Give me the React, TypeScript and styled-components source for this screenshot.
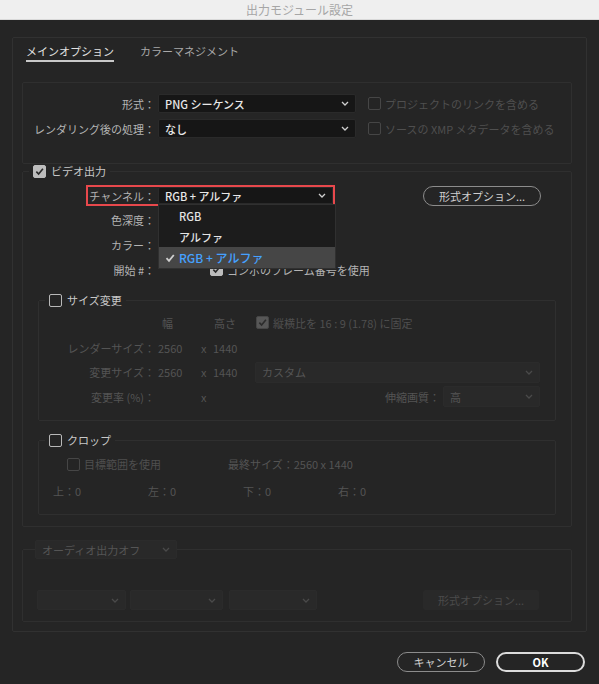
import React from "react";
import styled, { createGlobalStyle } from "styled-components";

const GlobalStyle = createGlobalStyle`
  html, body {
    margin: 0;
    padding: 0;
    background: #252525;
  }
  body {
    font-family: "Noto Sans CJK JP", "Noto Sans", sans-serif;
    font-size: 11px;
    line-height: 14px;
    color: #b4b4b4;
  }
  * {
    box-sizing: border-box;
  }
`;

const Window = styled.div`
  width: 599px;
  height: 684px;
  background: #252525;
  display: flex;
  flex-direction: column;
`;

const TitleBar = styled.div`
  height: 20px;
  background: #efefef;
  border-bottom: 1px solid #d9d9d9;
  display: flex;
  align-items: center;
  justify-content: center;
  color: #a6a6a6;
  font-size: 12px;
`;

const Panel = styled.div`
  margin: 17px 12px 0;
  height: 595px;
  border: 1px solid #313131;
  border-radius: 2px;
  display: flex;
  flex-direction: column;
`;

const TabBar = styled.div`
  display: flex;
  gap: 26px;
  padding-left: 13px;
`;

const Tab = styled.div<{ $active?: boolean }>`
  padding: 6px 0 2px;
  border-bottom: 2px solid ${(p) => (p.$active ? "#c9c9c9" : "transparent")};
  color: ${(p) => (p.$active ? "#e2e2e2" : "#a9a9a9")};
`;

const FormatBox = styled.div`
  margin: 20px 14px 0 9px;
  border: 1px solid #2f2f2f;
  border-radius: 2px;
  padding: 11px 0 25px;
  display: flex;
  flex-direction: column;
  gap: 6px;
`;

const Row = styled.div<{ $h?: number; $mt?: number; $pl?: number }>`
  display: flex;
  align-items: center;
  height: ${(p) => p.$h ?? 19}px;
  margin-top: ${(p) => p.$mt ?? 0}px;
  padding-left: ${(p) => p.$pl ?? 0}px;
  white-space: nowrap;
`;

const Label = styled.div<{ $w: number; $off?: boolean }>`
  width: ${(p) => p.$w}px;
  flex-shrink: 0;
  text-align: right;
  color: ${(p) => (p.$off ? "#545454" : "#b4b4b4")};
`;

const Select = styled.div<{ $w: number; $h?: number; $ml?: number; $off?: boolean }>`
  position: relative;
  width: ${(p) => p.$w}px;
  height: ${(p) => p.$h ?? 19}px;
  margin-left: ${(p) => p.$ml ?? 0}px;
  flex-shrink: 0;
  background: ${(p) => (p.$off ? "#292929" : "#161616")};
  border: 1px solid ${(p) => (p.$off ? "#2b2b2b" : "#2a2a2a")};
  border-radius: 2px;
  padding: 0 6px;
  display: flex;
  align-items: center;
  justify-content: space-between;
  color: ${(p) => (p.$off ? "#555555" : "#e8e8e8")};
  font-weight: ${(p) => (p.$off ? 400 : 500)};
`;

const CheckItem = styled.div<{ $ml?: number; $off?: boolean }>`
  display: flex;
  align-items: center;
  gap: 4px;
  margin-left: ${(p) => p.$ml ?? 0}px;
  color: ${(p) => (p.$off ? "#4f4f4f" : "#b4b4b4")};
`;

const Box = styled.span<{ $checked?: boolean; $off?: boolean }>`
  width: 13px;
  height: 13px;
  flex-shrink: 0;
  border-radius: 2px;
  border: 1.5px solid
    ${(p) => (p.$off ? "#464646" : p.$checked ? "#bdbdbd" : "#b9b9b9")};
  background: ${(p) =>
    p.$checked ? (p.$off ? "#575757" : "#bdbdbd") : "transparent"};
  display: inline-flex;
  align-items: center;
  justify-content: center;
`;

const Group = styled.fieldset<{ $m: string; $p: string }>`
  margin: ${(p) => p.$m};
  padding: ${(p) => p.$p};
  border: 1px solid #2f2f2f;
  border-radius: 2px;
  min-width: 0;
`;

const Legend = styled.legend<{ $ml: number; $px?: number }>`
  display: flex;
  margin-left: ${(p) => p.$ml}px;
  padding: 0 ${(p) => p.$px ?? 4}px;
`;

const LegendInner = styled.div`
  display: flex;
  align-items: center;
  gap: 5px;
  height: 14px;
  color: #c8c8c8;
`;

const Highlight = styled.div`
  display: flex;
  align-items: center;
  height: 17px;
  outline: 2px solid #e8484c;
`;

const Menu = styled.div`
  position: absolute;
  top: calc(100% + 1px);
  left: -1px;
  width: 178px;
  background: #1c1c1c;
  border: 1px solid #303030;
  z-index: 5;
  font-weight: 500;
`;

const MenuItem = styled.div<{ $selected?: boolean }>`
  position: relative;
  height: 21px;
  display: flex;
  align-items: center;
  padding-left: 20px;
  font-size: ${(p) => (p.$selected ? 12 : 11)}px;
  background: ${(p) => (p.$selected ? "#464646" : "transparent")};
  color: ${(p) => (p.$selected ? "#45a1ff" : "#e4e4e4")};
  svg {
    position: absolute;
    left: 6px;
  }
`;

const PillButton = styled.div<{ $w: number; $ml?: number; $primary?: boolean }>`
  width: ${(p) => p.$w}px;
  height: 20px;
  margin-left: ${(p) => p.$ml ?? 0}px;
  flex-shrink: 0;
  border-radius: 10px;
  border: ${(p) => (p.$primary ? "2px solid #dcdcdc" : "1.5px solid #8c8c8c")};
  color: ${(p) => (p.$primary ? "#ffffff" : "#cfcfcf")};
  font-weight: ${(p) => (p.$primary ? 700 : 400)};
  display: flex;
  align-items: center;
  justify-content: center;
`;

const FlatButton = styled.div`
  width: 116px;
  height: 20px;
  margin-left: auto;
  background: #292929;
  border-radius: 2px;
  color: #4b4b4b;
  display: flex;
  align-items: center;
  justify-content: center;
`;

const VideoRows = styled.div`
  padding-left: 50px;
`;

const Cell = styled.div<{ $w: number; $pl?: number; $off?: boolean }>`
  width: ${(p) => p.$w}px;
  flex-shrink: 0;
  padding-left: ${(p) => p.$pl ?? 0}px;
  color: ${(p) => (p.$off ? "#545454" : "#b4b4b4")};
`;

const Spacer = styled.div`
  flex: 1;
`;

const Footer = styled.div`
  display: flex;
  justify-content: flex-end;
  gap: 11px;
  padding: 20px 14px 0 0;
`;

const Chevron = ({ color = "#cfcfcf" }: { color?: string }) => (
  <svg width="8" height="5" viewBox="0 0 8 5">
    <polyline points="1,1 4,4 7,1" fill="none" stroke={color} strokeWidth="1.3" />
  </svg>
);

const Tick = ({ color, size = 9 }: { color: string; size?: number }) => (
  <svg width={size} height={size} viewBox="0 0 10 10">
    <polyline points="1.5,5.2 4,7.8 8.8,2" fill="none" stroke={color} strokeWidth="1.8" />
  </svg>
);

const CheckBox = ({ checked, off }: { checked?: boolean; off?: boolean }) => (
  <Box $checked={checked} $off={off}>
    {checked && <Tick color={off ? "#2c2c2c" : "#2a2a2a"} />}
  </Box>
);

const offChevron = "#4a4a4a";

export default function App() {
  return (
    <Window>
      <GlobalStyle />
      <TitleBar>出力モジュール設定</TitleBar>
      <Panel>
        <TabBar>
          <Tab $active>メインオプション</Tab>
          <Tab>カラーマネジメント</Tab>
        </TabBar>

        <FormatBox>
          <Row>
            <Label $w={132}>形式：</Label>
            <Select $w={198} $ml={3}>
              PNG シーケンス
              <Chevron />
            </Select>
            <CheckItem $ml={12} $off>
              <CheckBox off />
              プロジェクトのリンクを含める
            </CheckItem>
          </Row>
          <Row>
            <Label $w={132}>レンダリング後の処理：</Label>
            <Select $w={198} $ml={3}>
              なし
              <Chevron />
            </Select>
            <CheckItem $ml={12} $off>
              <CheckBox off />
              ソースの XMP メタデータを含める
            </CheckItem>
          </Row>
        </FormatBox>

        <Group $m="0 14px 0 9px" $p="9px 15px 11px 15px">
          <Legend $ml={-9}>
            <LegendInner>
              <CheckBox checked />
              ビデオ出力
            </LegendInner>
          </Legend>

          <VideoRows>
            <Row $h={17}>
              <Highlight>
                <Label $w={67}>チャンネル：</Label>
                <Select $w={175} $h={17} $ml={3}>
                  RGB + アルファ
                  <Chevron />
                  <Menu>
                    <MenuItem>RGB</MenuItem>
                    <MenuItem>アルファ</MenuItem>
                    <MenuItem $selected>
                      <Tick color="#cfcfcf" size={10} />
                      RGB + アルファ
                    </MenuItem>
                  </Menu>
                </Select>
              </Highlight>
              <PillButton $w={118} $ml={90}>
                形式オプション...
              </PillButton>
            </Row>
            <Row $h={25} $mt={3}>
              <Label $w={67}>色深度：</Label>
              <Select $w={175} $ml={3} />
            </Row>
            <Row $h={25}>
              <Label $w={67}>カラー：</Label>
              <Select $w={175} $ml={3} />
            </Row>
            <Row $h={25}>
              <Label $w={67}>開始 #：</Label>
              <Cell $w={55} $pl={3} $off />
              <CheckItem>
                <CheckBox checked />
                コンポのフレーム番号を使用
              </CheckItem>
            </Row>
          </VideoRows>

          <Group $m="11px 0 0 0" $p="3px 15px 11px 0">
            <Legend $ml={6}>
              <LegendInner>
                <CheckBox />
                サイズ変更
              </LegendInner>
            </Legend>
            <Row $h={25}>
              <Label $w={116} />
              <Cell $w={46} $pl={7} $off>
                幅
              </Cell>
              <Cell $w={12} $off />
              <Cell $w={43} $pl={1} $off>
                高さ
              </Cell>
              <CheckItem $off>
                <CheckBox checked off />
                縦横比を 16 : 9 (1.78) に固定
              </CheckItem>
            </Row>
            <Row $h={25}>
              <Label $w={116} $off>
                レンダーサイズ：
              </Label>
              <Cell $w={46} $pl={3} $off>
                2560
              </Cell>
              <Cell $w={12} $off>
                x
              </Cell>
              <Cell $w={42} $off>
                1440
              </Cell>
            </Row>
            <Row $h={24}>
              <Label $w={116} $off>
                変更サイズ：
              </Label>
              <Cell $w={46} $pl={3} $off>
                2560
              </Cell>
              <Cell $w={12} $off>
                x
              </Cell>
              <Cell $w={42} $off>
                1440
              </Cell>
              <Select $w={285} $h={21} $off>
                カスタム
                <Chevron color={offChevron} />
              </Select>
            </Row>
            <Row $h={25}>
              <Label $w={116} $off>
                変更率 (%)：
              </Label>
              <Cell $w={46} $off />
              <Cell $w={12} $off>
                x
              </Cell>
              <Spacer />
              <Label $w={80} $off>
                伸縮画質：
              </Label>
              <Select $w={97} $h={21} $ml={3} $off>
                高
                <Chevron color={offChevron} />
              </Select>
            </Row>
          </Group>

          <Group $m="12px 0 0 0" $p="5px 15px 11px 0">
            <Legend $ml={6}>
              <LegendInner>
                <CheckBox />
                クロップ
              </LegendInner>
            </Legend>
            <Row $h={24} $pl={28}>
              <Cell $w={161}>
                <CheckItem $off>
                  <CheckBox off />
                  目標範囲を使用
                </CheckItem>
              </Cell>
              <Cell $w={200} $off>
                最終サイズ：2560 x 1440
              </Cell>
            </Row>
            <Row $h={24} $mt={3} $pl={14}>
              <Cell $w={95} $off>上：0</Cell>
              <Cell $w={95} $off>左：0</Cell>
              <Cell $w={95} $off>下：0</Cell>
              <Cell $w={95} $off>右：0</Cell>
            </Row>
          </Group>
        </Group>

        <Group $m="13px 14px 0 9px" $p="31px 32px 11px 14px">
          <Legend $ml={-2} $px={0}>
            <Select $w={142} $off>
              オーディオ出力オフ
              <Chevron color={offChevron} />
            </Select>
          </Legend>
          <Row $h={20}>
            <Select $w={89} $h={20} $off>
              <span />
              <Chevron color={offChevron} />
            </Select>
            <Select $w={93} $h={20} $ml={4} $off>
              <span />
              <Chevron color={offChevron} />
            </Select>
            <Select $w={88} $h={20} $ml={6} $off>
              <span />
              <Chevron color={offChevron} />
            </Select>
            <FlatButton>形式オプション...</FlatButton>
          </Row>
        </Group>
      </Panel>

      <Footer>
        <PillButton $w={88}>キャンセル</PillButton>
        <PillButton $w={89} $primary>
          OK
        </PillButton>
      </Footer>
    </Window>
  );
}
